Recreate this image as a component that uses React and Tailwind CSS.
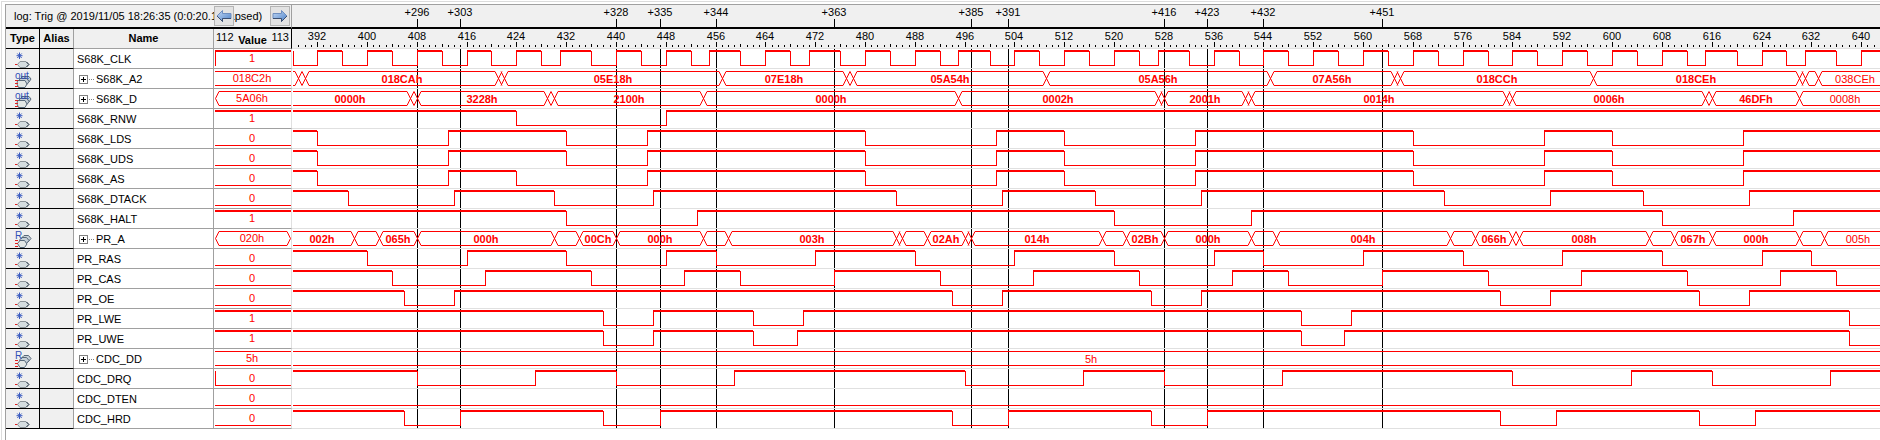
import React from "react";

const PX_PER_SAMPLE = 6.226;
const ORIGIN = 387.888;
const LAST = 645;
const PLOT_WIDTH = 1600;
const xOf = (s) => Math.floor((s - ORIGIN) * PX_PER_SAMPLE);

const CURSORS = [296, 303, 328, 335, 344, 363, 385, 391, 416, 423, 432, 451];
const CURSOR_BASE = 112;

const CLK = [388, 392, 396, 400, 404, 408, 412, 416, 420, 424, 428, 431, 436, 440, 444, 448, 452, 455, 460, 464, 468, 471, 476, 480, 484, 488, 492, 495, 500, 504, 508, 512, 516, 520, 524, 527, 532, 536, 540, 544, 548, 552, 556, 560, 564, 568, 572, 576, 580, 584, 588, 592, 596, 600, 604, 608, 612, 615, 620, 624, 628, 631, 636, 640];
const LDS = [392, 413, 432, 445, 480, 501, 512, 533, 568, 589, 600, 621];

const SIGNALS = [
  { name: "S68K_CLK", value: "1", level: 1, edge: true, toggles: CLK },
  {
    name: "S68K_A2", kind: "out", value: "018C2h",
    segments: [["", 389], ["", 390], ["018CAh", 421], ["", 422], ["05E18h", 457], ["07E18h", 477], ["", 478], ["05A54h", 509], ["05A56h", 545], ["07A56h", 565], ["", 566], ["018CCh", 597], ["018CEh", 630], ["", 631], ["", 633], ["038CEh", null]],
  },
  {
    name: "S68K_D", kind: "out", value: "5A06h", open: true,
    segments: [["0000h", 407], ["", 408], ["3228h", 429], ["", 430], ["2100h", 454], ["0000h", 495], ["0002h", 527], ["", 528], ["2001h", 541], ["", 542], ["0014h", 583], ["", 584], ["0006h", 615], ["", 616], ["46DFh", 630], ["0008h", null]],
  },
  { name: "S68K_RNW", value: "1", level: 1, toggles: [424, 448] },
  { name: "S68K_LDS", value: "0", level: 0, toggles: LDS },
  { name: "S68K_UDS", value: "0", level: 0, toggles: LDS },
  { name: "S68K_AS", value: "0", level: 0, toggles: [392, 413, 424, 445, 480, 501, 512, 533, 568, 589, 600, 621] },
  { name: "S68K_DTACK", value: "0", level: 0, toggles: [397, 414, 430, 446, 485, 502, 517, 534, 573, 590, 605, 622] },
  { name: "S68K_HALT", value: "1", level: 1, toggles: [432, 453, 520, 542, 608, 629] },
  {
    name: "PR_A", kind: "R", value: "020h", open: true, close: true,
    segments: [["002h", 398], ["", 402], ["065h", 408], ["000h", 430], ["", 434], ["00Ch", 440], ["000h", 454], ["", 458], ["003h", 485], ["", 486], ["", 490], ["02Ah", 496], ["", 497], ["014h", 518], ["", 522], ["02Bh", 528], ["000h", 542], ["", 546], ["004h", 574], ["", 578], ["066h", 584], ["", 585], ["008h", 606], ["", 610], ["067h", 616], ["000h", 630], ["", 634], ["005h", null]],
  },
  { name: "PR_RAS", value: "0", level: 0, toggles: [400, 416, 432, 448, 456, 472, 488, 504, 520, 536, 544, 560, 576, 592, 608, 624, 632] },
  { name: "PR_CAS", value: "0", level: 0, toggles: [404, 419, 436, 451, 460, 475, 492, 507, 524, 539, 548, 563, 580, 595, 612, 627, 636] },
  { name: "PR_OE", value: "0", level: 0, toggles: [406, 414, 494, 502, 526, 534, 582, 590, 614, 622] },
  { name: "PR_LWE", value: "1", level: 1, toggles: [438, 446, 462, 470, 550, 558, 638] },
  { name: "PR_UWE", value: "1", level: 1, toggles: [438, 446, 462, 469, 550, 557, 638] },
  { name: "CDC_DD", kind: "R", value: "5h", segments: [["5h", null]] },
  { name: "CDC_DRQ", value: "0", level: 0, edge: true, toggles: [408, 427, 440, 459, 496, 515, 528, 547, 584, 603, 616, 635] },
  { name: "CDC_DTEN", value: "0", level: 0, low: true, toggles: [] },
  { name: "CDC_HRD", value: "0", level: 0, toggles: [406, 415, 438, 447, 494, 503, 526, 535, 582, 591, 614, 623] },
];

function digitalPaths(toggles, startLow) {
  let high = !startLow;
  let x = 1;
  let thin = "";
  let thick = "";
  [...toggles, null].forEach((t) => {
    const nx = t === null ? PLOT_WIDTH : Math.max(1, xOf(t));
    if (high) thick += `M${x} 2H${nx}`;
    else thin += `M${x} 16.5H${nx + 1}`;
    if (t !== null) thin += `M${nx + 0.5} ${high ? 2 : 1}V${high ? 17 : 16}`;
    high = !high;
    x = nx;
  });
  return { thin, thick };
}

function DigitalWave({ signal }) {
  const { thin, thick } = digitalPaths(signal.toggles, signal.low);
  return (
    <g fill="none" stroke="#ff0000" shapeRendering="crispEdges">
      <path d={thin} />
      <path d={thick} strokeWidth="2" />
    </g>
  );
}

function BusWave({ segments }) {
  let start = -2;
  let lines = "";
  let crosses = "";
  const labels = [];
  segments.forEach(([label, end], i) => {
    const nx = end === null ? 1599 : xOf(end);
    const from = i === 0 ? 1 : start + 4;
    const to = end === null ? PLOT_WIDTH : nx - 3;
    if (to > from) lines += `M${from} 2.5H${to}M${from} 16.5H${to}`;
    if (end !== null) crosses += `M${nx - 3} 2.5L${nx + 4} 16.5M${nx + 4} 2.5L${nx - 3} 16.5`;
    if (label) labels.push({ label, x: Math.round((start + nx) / 2), last: end === null });
    start = nx;
  });
  return (
    <>
      <path d={lines} fill="none" stroke="#ff0000" shapeRendering="crispEdges" />
      <path d={crosses} fill="none" stroke="#ff0000" />
      {labels.map((l) => (
        <text key={l.x} x={l.x} y="14" textAnchor="middle" fill="#ff0000" className={l.last ? "text-[11px]" : "text-[11px] font-bold"}>
          {l.label}
        </text>
      ))}
    </>
  );
}

function Plot({ signal }) {
  return (
    <svg width={PLOT_WIDTH} height="19" className="block">
      <g fill="#000000">
        {CURSORS.map((c) => (
          <rect key={c} x={xOf(c + CURSOR_BASE)} y="0" width="1" height="19" />
        ))}
      </g>
      {signal.segments ? <BusWave segments={signal.segments} /> : <DigitalWave signal={signal} />}
    </svg>
  );
}

function ValueWave({ signal }) {
  const { segments, level, edge, open, close, value } = signal;
  const l = open ? 5 : 1;
  const r = close ? 73 : 77;
  let d;
  if (segments) {
    d = `M${l} 2.5H${r}M${l} 16.5H${r}`;
  } else {
    d = level ? "" : "M1 16.5H77";
    if (edge) d += "M1.5 2V17";
  }
  return (
    <svg width="77" height="19" className="block">
      <path d={d} stroke="#ff0000" shapeRendering="crispEdges" />
      {!segments && level === 1 && <path d="M1 2H77" stroke="#ff0000" strokeWidth="2" shapeRendering="crispEdges" />}
      {open && <path d="M5 2.5L1.5 9.5L5 16.5" fill="none" stroke="#ff0000" />}
      {close && <path d="M73 2.5L76.5 9.5L73 16.5" fill="none" stroke="#ff0000" />}
      <text x="38" y="13" textAnchor="middle" fill="#ff0000" className="text-[11px]">{value}</text>
    </svg>
  );
}

function TypeIcon({ kind }) {
  if (!kind) {
    return (
      <svg width="33" height="18" className="block" aria-hidden="true">
        <path d="M13.5 2.5V9M10.5 5.7H16.5M11.3 3.5L15.7 8M15.7 3.5L11.3 8" stroke="#3a5bc0" fill="none" />
        <path d="M9 14.5H12" stroke="#e02020" />
        <path d="M11.5 14.5L14 11.5H20L22.5 14.5L20 17.5H14Z" fill="#d5dde0" stroke="#8d9499" />
        <path d="M20.5 12L23 14.5L20.5 17" fill="none" stroke="#26384a" />
      </svg>
    );
  }
  const out = kind === "out";
  return (
    <svg width="33" height="18" className="block" aria-hidden="true">
      <path d={out ? "M15.5 6.5H23L25 9L23 12H16Z" : "M15.5 8L18 5.5H22.5L25 8.5L22 12H17Z"} fill="#c6d0d8" stroke="#59697a" />
      <path d={out ? "M13.5 8.5H21L23 11.5L21 14.5H14Z" : "M13.5 10L16 7.5H20.5L23 10.5L20 14H15Z"} fill="#c6d0d8" stroke="#59697a" />
      <path d={out ? "M11.5 10.5H19L21 14L19 17.5H12.5L11 14Z" : "M11.5 13.5L14 10.5H18.5L21 14L18.5 17.5H14Z"} fill="#e2e6e4" stroke="#59697a" />
      <path d="M9 10.5H12M9 13.5H12M9 16.5H12" stroke="#e02020" shapeRendering="crispEdges" />
      <text x="9" y="9" fill="#3050b8" className="text-[10px]">{kind}</text>
    </svg>
  );
}

function Arrow({ left }) {
  return (
    <svg width="16" height="14" viewBox="0 0 16 14" aria-hidden="true">
      <defs>
        <linearGradient id={left ? "arrowL" : "arrowR"} x1="0" y1="0" x2="1" y2="1">
          <stop offset="0" stopColor="#c3d9f5" />
          <stop offset="1" stopColor="#4f83c9" />
        </linearGradient>
      </defs>
      <path
        d={left ? "M1 7L6.5 1.5V4.5H15V9.5H6.5V12.5Z" : "M15 7L9.5 1.5V4.5H1V9.5H9.5V12.5Z"}
        fill={left ? "url(#arrowL)" : "url(#arrowR)"}
        stroke="#6f8fc0"
      />
      <path d={left ? "M15 9.5H6.5V12.5L1 7" : "M1 9.5H9.5V12.5L15 7"} fill="none" stroke="#3c4f70" />
    </svg>
  );
}

function CursorStrip() {
  return (
    <svg width={PLOT_WIDTH} height="22" className="block">
      {CURSORS.map((c) => {
        const x = xOf(c + CURSOR_BASE);
        return (
          <g key={c}>
            <text x={x} y="11" textAnchor="middle" className="text-[11px]">+{c}</text>
            <rect x={x} y="14" width="1" height="8" />
          </g>
        );
      })}
    </svg>
  );
}

function Ruler() {
  const samples = [];
  for (let s = 389; s < LAST; s += 1) samples.push(s);
  return (
    <svg width={PLOT_WIDTH} height="18" className="block">
      {samples.map((s) => {
        const h = s % 8 === 0 ? 5 : s % 4 === 0 ? 3 : 2;
        return <rect key={s} x={xOf(s)} y={17 - h} width="1" height={h} />;
      })}
      {samples.filter((s) => s % 8 === 0).map((s) => (
        <text key={s} x={xOf(s)} y="10" textAnchor="middle" className="text-[11px]">{s}</text>
      ))}
    </svg>
  );
}

const stepButton = "absolute top-px flex h-5 w-5 items-center justify-center border border-[#b4b4b4] bg-[#e3e3e3]";
const headCell = "overflow-hidden bg-[#f0f0f0] p-0 text-center text-[11px] font-bold";

export default function App() {
  return (
    <div className="min-h-screen overflow-hidden bg-white pt-px pl-px font-['Liberation_Sans',Arial,sans-serif] text-[11px] text-black">
      <div className="min-h-screen border-t border-l border-[#dcdcdc] pt-[2px] pl-[3px]">
        <div className="min-h-screen border-t border-l border-[#a0a0a0]">
          <table className="w-full table-fixed border-separate border-spacing-0">
            <colgroup>
              <col className="w-[34px]" />
              <col className="w-[34px]" />
              <col className="w-[140px]" />
              <col className="w-[78px]" />
              <col />
            </colgroup>
            <thead>
              <tr>
                <td colSpan={4} className="relative h-[24px] border-r border-b-2 border-r-[#a0a0a0] border-b-black bg-[#f0f0f0] p-0 pl-2 whitespace-nowrap">
                  log: Trig @ 2019/11/05 18:26:35 (0:0:20.1 elapsed)
                  <button type="button" aria-label="Previous transition" className={`${stepButton} right-[57px]`}>
                    <Arrow left />
                  </button>
                  <button type="button" aria-label="Next transition" className={`${stepButton} right-px`}>
                    <Arrow />
                  </button>
                </td>
                <td className="h-[24px] overflow-hidden border-b-2 border-black bg-[#f0f0f0] p-0">
                  <CursorStrip />
                </td>
              </tr>
              <tr className="h-[20px]">
                <th className={`${headCell} border-r border-b border-black`}>Type</th>
                <th className={`${headCell} border-r border-b border-r-[#a0a0a0] border-b-black`}>Alias</th>
                <th className={`${headCell} border-r border-b border-[#a0a0a0]`}>Name</th>
                <th className={`${headCell} border-r border-b border-r-black border-b-[#a0a0a0]`}>
                  <div className="flex h-[18px] justify-between px-[2px] leading-[14px] font-normal">
                    <span>112</span>
                    <span className="pt-[3px] font-bold">Value</span>
                    <span>113</span>
                  </div>
                </th>
                <th className={`${headCell} border-b border-[#e0e0e0] font-normal`}>
                  <Ruler />
                </th>
              </tr>
            </thead>
            <tbody>
              {SIGNALS.map((s) => (
                <tr key={s.name} className="h-[20px]">
                  <td className="border-r border-b border-black bg-[#f0f0f0] p-0">
                    <TypeIcon kind={s.kind} />
                  </td>
                  <td className="border-r border-b border-r-[#a0a0a0] border-b-black bg-[#f0f0f0] p-0" />
                  <td className="border-r border-b border-[#a0a0a0] p-0">
                    <div className="flex h-[19px] items-center pt-px pl-[3px] leading-[18px]">
                      {s.kind && (
                        <>
                          <button type="button" aria-label={`Expand ${s.name}`} className="ml-[2px] flex h-[9px] w-[9px] items-center justify-center border border-[#808080] bg-white">
                            <svg width="5" height="5" shapeRendering="crispEdges" aria-hidden="true">
                              <path d="M0 2.5H5M2.5 0V5" stroke="#000000" />
                            </svg>
                          </button>
                          <span className="mr-[2px] ml-px w-[5px] border-t border-dotted border-[#808080]" />
                        </>
                      )}
                      <span>{s.name}</span>
                    </div>
                  </td>
                  <td className="overflow-hidden border-r border-b border-r-[#e0e0e0] border-b-[#a0a0a0] p-0">
                    <ValueWave signal={s} />
                  </td>
                  <td className="overflow-hidden border-b border-[#e0e0e0] p-0">
                    <Plot signal={s} />
                  </td>
                </tr>
              ))}
            </tbody>
          </table>
        </div>
      </div>
    </div>
  );
}
